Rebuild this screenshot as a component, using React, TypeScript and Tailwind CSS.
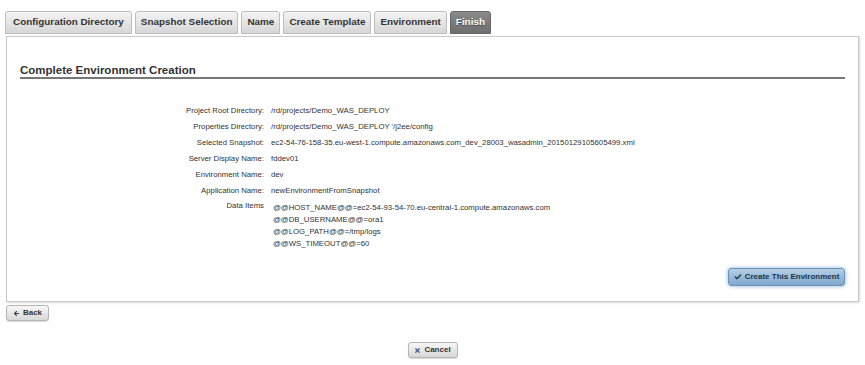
import { Check, ArrowLeft, X } from "lucide-react";

const tabs = [
  "Configuration Directory",
  "Snapshot Selection",
  "Name",
  "Create Template",
  "Environment",
  "Finish",
];

const details = [
  { label: "Project Root Directory:", value: "/rd/projects/Demo_WAS_DEPLOY" },
  { label: "Properties Directory:", value: "/rd/projects/Demo_WAS_DEPLOY '/j2ee/config" },
  {
    label: "Selected Snapshot:",
    value:
      "ec2-54-76-158-35.eu-west-1.compute.amazonaws.com_dev_28003_wasadmin_20150129105605499.xml",
  },
  { label: "Server Display Name:", value: "fddev01" },
  { label: "Environment Name:", value: "dev" },
  { label: "Application Name:", value: "newEnvironmentFromSnapshot" },
];

const dataItems = [
  "@@HOST_NAME@@=ec2-54-93-54-70.eu-central-1.compute.amazonaws.com",
  "@@DB_USERNAME@@=ora1",
  "@@LOG_PATH@@=/tmp/logs",
  "@@WS_TIMEOUT@@=60",
];

const App = () => {
  return (
    <div className="w-[865px] h-[365px] bg-white font-['Liberation_Sans',Arial,sans-serif] text-[#333]">
      <div className="flex gap-[3px] pl-[5px] pt-[11px]">
        {tabs.map((tab, i) =>
          tab === "Finish" ? (
            <div
              key={tab}
              className="h-[23px] px-[5px] flex items-center rounded-t-[3px] border border-[#666] bg-gradient-to-b from-[#8a8a8a] to-[#6e6e6e] text-white text-[9.9px] font-bold [text-shadow:0_1px_1px_#444]"
            >
              {tab}
            </div>
          ) : (
            <div
              key={tab}
              className={
                i === 0
                  ? "h-[23px] px-[7px] flex items-center rounded-t-[3px] border border-[#bdbdbd] bg-gradient-to-b from-[#f4f4f4] to-[#d6d6d6] text-[#333] text-[9.9px] font-bold"
                  : "h-[23px] px-[5px] flex items-center rounded-t-[3px] border border-[#bdbdbd] bg-gradient-to-b from-[#f4f4f4] to-[#d6d6d6] text-[#333] text-[9.9px] font-bold"
              }
            >
              {tab}
            </div>
          )
        )}
      </div>

      <div className="mx-[6px] mt-[2px] h-[266px] border border-[#c8c8c8] shadow-[1px_1px_2px_rgba(0,0,0,0.15)] flex flex-col px-[13px]">
        <div className="pt-[26px] text-[11.5px] leading-[14px] font-bold text-[#333] border-b-2 border-[#777]">
          Complete Environment Creation
        </div>

        <div className="mt-[24px] flex flex-col text-[7.75px]">
          {details.map((d) => (
            <div key={d.label} className="flex h-[16px] items-center">
              <div className="w-[251px] text-right pr-[7px] shrink-0">{d.label}</div>
              <div className="whitespace-nowrap">{d.value}</div>
            </div>
          ))}
          <div className="flex mt-[1px]">
            <div className="w-[251px] text-right pr-[7px] shrink-0 leading-[12px]">Data Items</div>
            <div className="flex flex-col pl-[2px] text-[7.75px] leading-[12px] pt-[2px]">
              {dataItems.map((item) => (
                <div key={item} className="whitespace-nowrap">
                  {item}
                </div>
              ))}
            </div>
          </div>
        </div>

        <div className="flex justify-end mt-[18px]">
          <button className="h-[18px] w-[117px] flex items-center justify-center gap-[3px] rounded-[3px] border border-[#6b93b8] bg-gradient-to-b from-[#b3cfe6] to-[#7fa8cd] shadow-[0_0_4px_rgba(90,150,210,0.7)] text-[8px] font-bold text-[#1f3347]">
            <Check size={8} strokeWidth={4} className="text-[#1f3347]" />
            Create This Environment
          </button>
        </div>
      </div>

      <div className="pl-[6px] pt-[3px]">
        <button className="h-[16px] w-[43px] flex items-center justify-center gap-[3px] rounded-[3px] border border-[#b5b5b5] bg-gradient-to-b from-[#f7f7f7] to-[#d8d8d8] shadow-[0_1px_1px_rgba(0,0,0,0.15)] text-[8px] font-bold text-[#333]">
          <ArrowLeft size={7} strokeWidth={3.5} />
          Back
        </button>
      </div>

      <div className="flex justify-center pt-[21px]">
        <button className="h-[16px] w-[50px] flex items-center justify-center gap-[3px] rounded-[3px] border border-[#b5b5b5] bg-gradient-to-b from-[#f7f7f7] to-[#d8d8d8] shadow-[0_1px_1px_rgba(0,0,0,0.15)] text-[8px] font-bold text-[#333]">
          <X size={7} strokeWidth={4.5} className="text-[#44618a]" />
          Cancel
        </button>
      </div>
    </div>
  );
};

export default App;
